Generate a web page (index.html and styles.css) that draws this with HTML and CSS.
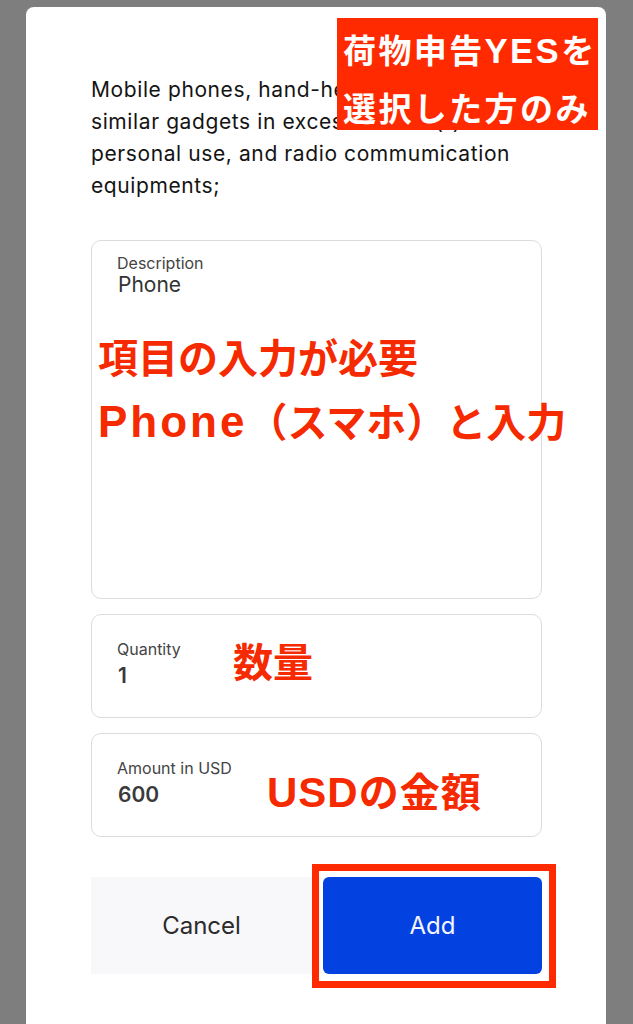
FILE: index.html
```html
<!DOCTYPE html>
<html lang="en">
<head>
    <meta charset="UTF-8">
    <meta name="viewport" content="width=device-width, initial-scale=1.0">
    <title>Add Item</title>
    <link rel="stylesheet" href="styles.css">
</head>
<body>
    <div class="modal">
        <div class="note note-top">荷物申告<span class="latin">YES</span>を<br>選択した方のみ</div>

        <p class="intro">Mobile phones, hand-held radios and<br>similar gadgets in excess of one (1) for<br>personal use, and radio commumication<br>equipments;</p>

        <div class="field field-tall">
            <span class="field-label">Description</span>
            <span class="field-value">Phone</span>
            <div class="note note-desc">項目の入力が必要<br><span class="latin">Phone</span>（スマホ）と入力</div>
        </div>

        <div class="field field-short">
            <span class="field-label">Quantity</span>
            <span class="field-value strong">1</span>
            <div class="note note-qty">数量</div>
        </div>

        <div class="field field-short">
            <span class="field-label">Amount in USD</span>
            <span class="field-value strong">600</span>
            <div class="note note-usd"><span class="latin">USD</span>の金額</div>
        </div>

        <div class="actions">
            <button class="btn-cancel">Cancel</button>
            <button class="btn-add">Add</button>
        </div>
    </div>
</body>
</html>
```

FILE: styles.css
```css
body {
    font-family: Inter, "Noto Sans", sans-serif;
    background-color: #7e7e7e;
    color: #111;
    margin: 0;
    height: 1024px;
    overflow: hidden;
}

.modal {
    position: relative;
    margin: 7px 27px 0 26px;
    padding: 67px 64px 60px 65px;
    background-color: white;
    border-radius: 8px;
    min-height: 1017px;
    box-sizing: border-box;
}

.intro {
    margin: 0 0 38px;
    font-size: 21px;
    line-height: 32px;
    letter-spacing: 0.6px;
    color: #141414;
    white-space: nowrap;
}

.field {
    position: relative;
    display: flex;
    flex-direction: column;
    border: 1.5px solid #dcdcdc;
    border-radius: 10px;
    padding: 0 25px;
    margin-bottom: 15px;
    box-sizing: border-box;
}

.field-tall {
    height: 359px;
    padding-top: 13px;
}

.field-short {
    height: 104px;
    justify-content: center;
    padding-bottom: 6px;
}

.field-label {
    font-size: 16px;
    line-height: 19px;
    color: #444;
}

.field-value {
    font-size: 21px;
    line-height: 24px;
    color: #333;
    padding-left: 1px;
}

.field-short .field-label {
    font-size: 16px;
    line-height: 22px;
}

.field-value.strong {
    font-weight: 600;
    margin-top: 4px;
    color: #3a3a3a;
}

.actions {
    display: grid;
    grid-template-columns: 229px 1fr;
    gap: 3px;
    margin-top: 40px;
}

.actions button {
    font-family: Inter, "Noto Sans", sans-serif;
    font-size: 24px;
    height: 97px;
    border: none;
    cursor: pointer;
}

.btn-cancel {
    background-color: #f8f8fb;
    color: #2b2b2b;
    padding-right: 14px;
}

.btn-add {
    position: relative;
    background-color: #0342e1;
    color: #f4f6ff;
    border-radius: 6px;
}

.btn-add::after {
    content: "";
    position: absolute;
    top: -13px;
    left: -11px;
    right: -14px;
    bottom: -14px;
    border: 7px solid #ff2a00;
}

/* red annotations laid over the form */
.note {
    position: absolute;
    font-family: "Noto Sans CJK JP", sans-serif;
    font-weight: 700;
    white-space: nowrap;
}

.note .latin {
    font-family: "Liberation Sans", Arial, sans-serif;
    font-size: 1.05em;
}

.note-top {
    top: 11px;
    left: 311px;
    width: 261px;
    height: 112px;
    box-sizing: border-box;
    padding: 3px 0 0 6px;
    background-color: #ff2a00;
    color: white;
    font-size: 33px;
    line-height: 56px;
    letter-spacing: 2.4px;
}

.note-desc {
    top: 83px;
    left: 6px;
    color: #f52a00;
    font-size: 40px;
    line-height: 64px;
}

.note-desc .latin {
    font-size: 1.1em;
    letter-spacing: 3px;
}

.note-qty {
    top: 25px;
    left: 141px;
    color: #f52a00;
    font-size: 40px;
    line-height: 40px;
}

.note-usd {
    top: 36px;
    left: 175px;
    color: #f52a00;
    font-size: 40px;
    line-height: 40px;
    letter-spacing: 1px;
}
```
